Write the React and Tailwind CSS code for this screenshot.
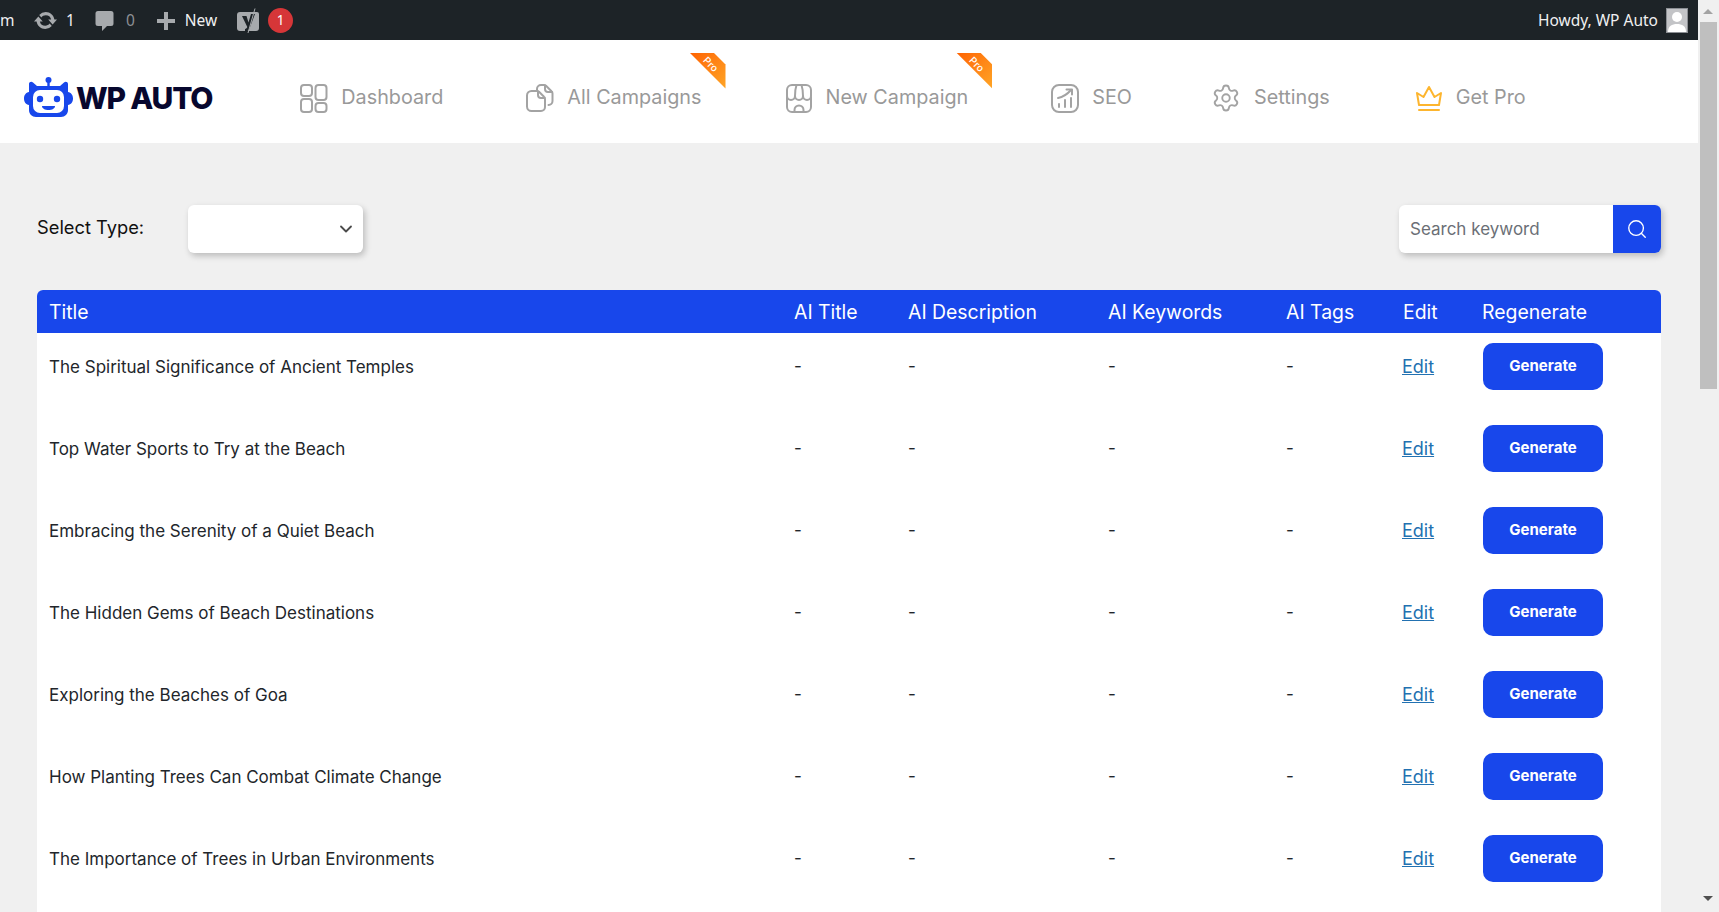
import { ChevronDown, Search, Settings } from "lucide-react";

const titles = [
  "The Spiritual Significance of Ancient Temples",
  "Top Water Sports to Try at the Beach",
  "Embracing the Serenity of a Quiet Beach",
  "The Hidden Gems of Beach Destinations",
  "Exploring the Beaches of Goa",
  "How Planting Trees Can Combat Climate Change",
  "The Importance of Trees in Urban Environments",
];

const iconProps = {
  width: 28,
  height: 30,
  viewBox: "0 0 28 30",
  fill: "none",
  stroke: "#a3a3a3",
  strokeWidth: 2,
  strokeLinecap: "round",
  strokeLinejoin: "round",
};

function DashboardIcon() {
  return (
    <svg {...iconProps}>
      <rect x="1" y="2" width="11" height="11" rx="3" />
      <rect x="1" y="16" width="11" height="13" rx="3" />
      <rect x="15.5" y="2" width="11" height="15" rx="3" />
      <rect x="15.5" y="20" width="11" height="9" rx="3" />
    </svg>
  );
}

function CampaignsIcon() {
  return (
    <svg {...iconProps}>
      <path d="M11 7.500V6a4 4 0 0 1 4-4h3a3 3 0 0 1 2 .8l5.500 5.500a3 3 0 0 1 1 2.200V18a4 4 0 0 1-4 4" />
      <path d="M19 2.500V6a3 3 0 0 0 3 3h4" />
      <path d="M5.500 8H11a3 3 0 0 1 2 .8l5 5a3 3 0 0 1 1 2.200v8a4 4 0 0 1-4 4H5.500a4.500 4.500 0 0 1-4.500-4.500v-11A4.500 4.500 0 0 1 5.500 8z" fill="#fff" />
      <path d="M12 8.500V12a3 3 0 0 0 3 3h3.500" />
    </svg>
  );
}

function StoreIcon() {
  return (
    <svg {...iconProps}>
      <path d="M2 14v10a5 5 0 0 0 5 5h14a5 5 0 0 0 5-5V14" />
      <path d="M7 2h14a5 5 0 0 1 5 5v6a4 4 0 0 1-4 4 4 4 0 0 1-4-4 4 4 0 0 1-8 0 4 4 0 0 1-4 4 4 4 0 0 1-4-4V7a5 5 0 0 1 5-5z" />
      <path d="M10 13c0-4 .5-8 1.500-11M18 13c0-4-.5-8-1.500-11" />
      <path d="M9.500 29v-2a4.500 4.500 0 0 1 9 0v2" />
    </svg>
  );
}

function SeoIcon() {
  return (
    <svg {...iconProps}>
      <rect x="1" y="2" width="26" height="27" rx="7" />
      <path d="M7 15c5-1 9-3.500 13-8" />
      <path d="M15.500 6.500H21v5" />
      <path d="M8 24v-3M14 24v-7M20 24v-9" />
    </svg>
  );
}

function CrownIcon() {
  return (
    <svg width="28" height="28" viewBox="0 0 28 28" fill="none" stroke="#fdb52e" strokeWidth="2" strokeLinecap="round" strokeLinejoin="round">
      <path d="M4 21 2 9l6.500 4L14 3l5.500 10L26 9l-2 12z" />
      <path d="M4 26h20" />
    </svg>
  );
}

function RobotLogo() {
  return (
    <svg width="49" height="41" viewBox="0 0 49 41" className="shrink-0">
      <circle cx="24.500" cy="3" r="3" fill="#1847eb" />
      <path d="M23.300 3h2.400v8h-2.400z" fill="#1847eb" />
      <path d="M5 15V7c0-2 2.500-3 4-1.500L13 9h23l4-3.500C41.500 4 44 5 44 7v8c3 .5 5 3 5 6.500S47 27.500 44 28v5c0 4-3 7-7 7H12c-4 0-7-3-7-7v-5c-3-.5-5-3-5-6.500S2 15.500 5 15z" fill="#1847eb" />
      <rect x="9" y="13" width="31" height="23" rx="7" fill="#fff" />
      <circle cx="16" cy="22" r="3.200" fill="#1847eb" />
      <circle cx="33" cy="22" r="3.200" fill="#1847eb" />
      <path d="M18 29h13c0 2.500-3 4-6.500 4S18 31.500 18 29z" fill="#1847eb" />
    </svg>
  );
}

function Ribbon() {
  return (
    <div className="absolute -right-[24px] -top-[30px] h-[36px] w-[36px] bg-linear-to-br from-[#ff6200] to-[#ffa525] [clip-path:polygon(0_0,24px_0,36px_12px,36px_100%)]">
      <span className="absolute left-[13px] top-[6px] rotate-45 text-[10px] font-medium leading-none text-white">Pro</span>
    </div>
  );
}

function NavItem({ icon, label, pro, spacing = "mr-[83px]" }) {
  return (
    <div className={`relative flex items-center gap-[13px] ${spacing}`}>
      {icon}
      <span className="relative text-[19.800px] leading-none text-[#999]">{label}</span>
      {pro ? <Ribbon /> : null}
    </div>
  );
}

function AdminBar() {
  return (
    <div className="flex h-10 items-center bg-[#1d2327] pt-[1px] text-[15.500px] text-[#f0f0f1] [font-family:'Noto_Sans',sans-serif]">
      <span className="w-[33px] overflow-hidden">m</span>
      <svg width="25" height="25" viewBox="0 0 20 20" fill="#a7aaad" className="shrink-0">
        <path d="M10.200 3.280c3.530 0 6.430 2.610 6.920 6h2.080l-3.500 4-3.500-4h2.320a4.439 4.439 0 0 0-4.320-3.450c-1.450 0-2.730.71-3.540 1.780L4.950 5.660a7.010 7.010 0 0 1 5.250-2.380zm-.4 13.440c-3.520 0-6.430-2.610-6.920-6H.8l3.500-4 3.500 4H5.480a4.439 4.439 0 0 0 4.320 3.450c1.450 0 2.730-.71 3.540-1.780l1.710 1.950a7.010 7.010 0 0 1-5.250 2.380z" />
      </svg>
      <span className="ml-[8px]">1</span>
      <svg width="19" height="22" viewBox="0 0 19 22" fill="#a7aaad" className="ml-[20px] shrink-0">
        <path d="M3 1h13a2.500 2.500 0 0 1 2.500 2.500v10A2.500 2.500 0 0 1 16 16h-4l-5 5v-5H3a2.500 2.500 0 0 1-2.500-2.500v-10A2.500 2.500 0 0 1 3 1z" />
      </svg>
      <span className="ml-[12px] text-[#8c8f94]">0</span>
      <svg width="18" height="18" viewBox="0 0 18 18" fill="#a7aaad" className="ml-[22px] shrink-0">
        <path d="M7 0h4v7h7v4h-7v7H7v-7H0V7h7z" />
      </svg>
      <span className="ml-[10px]">New</span>
      <svg width="24" height="26" viewBox="0 0 24 26" className="ml-[19px] shrink-0">
        <path d="M4 4h17a2 2 0 0 1 2 2v14a3 3 0 0 1-3 3H4a3 3 0 0 1-3-3V7a3 3 0 0 1 3-3z" fill="#a7aaad" />
        <path d="M6 8h4.500l2 6.500L15 6h4l-5.500 14.500c-.8 2-2.200 3-4.500 3.500v-3c1.200-.2 1.900-.8 2.300-2z" fill="#1d2327" />
        <path d="M19 0.500 12 25" stroke="#a7aaad" strokeWidth="1" />
      </svg>
      <span className="ml-[8px] grid h-[25px] w-[25px] place-items-center rounded-full bg-[#d63638] text-[13.500px] text-white">1</span>
      <div className="ml-auto flex items-center gap-[8px] pr-[10px]">
        <span>Howdy, WP Auto</span>
        <div className="h-[25px] w-[22px] overflow-hidden border border-[#8c8f94] bg-[#c3c4c7]">
          <svg width="20" height="23" viewBox="0 0 20 23" fill="#fff">
            <circle cx="10" cy="8" r="5" />
            <path d="M1 23c0-6 4-8 9-8s9 2 9 8z" />
          </svg>
        </div>
      </div>
    </div>
  );
}

function TopNav() {
  return (
    <div className="flex h-[103px] items-center bg-white pl-[24px] pt-[12px]">
      <div className="mr-[88px] flex items-center gap-[3px]">
        <RobotLogo />
        <span className="text-[30px] font-extrabold leading-none tracking-[-1.200px] text-[#07072e]">WP AUTO</span>
      </div>
      <NavItem icon={<DashboardIcon />} label="Dashboard" />
      <NavItem icon={<CampaignsIcon />} label="All Campaigns" pro />
      <NavItem icon={<StoreIcon />} label="New Campaign" pro />
      <NavItem icon={<SeoIcon />} label="SEO" spacing="mr-[79px]" />
      <NavItem icon={<Settings size={30} strokeWidth={1.500} color="#a3a3a3" />} label="Settings" spacing="mr-[85px]" />
      <NavItem icon={<CrownIcon />} label="Get Pro" />
    </div>
  );
}

function Filters() {
  return (
    <div className="flex items-center justify-between">
      <div className="flex items-center">
        <span className="-mt-[2px] w-[151px] text-[18.300px] text-[#111]">Select Type:</span>
        <div className="flex h-[48px] w-[175px] items-center justify-end rounded-md bg-white pr-[7px] shadow-[2px_3px_6px_rgba(0,0,0,0.22)]">
          <ChevronDown size={20} strokeWidth={2.200} color="#4b4b4b" />
        </div>
      </div>
      <div className="flex h-[48px] w-[262px] overflow-hidden rounded-md bg-white shadow-[2px_3px_6px_rgba(0,0,0,0.22)]">
        <span className="flex flex-1 items-center pl-[11px] pt-[1px] text-[17px] text-[#6b6f76]">Search keyword</span>
        <div className="grid w-[48px] place-items-center bg-[#1847eb]">
          <Search size={22} strokeWidth={1.500} color="#fff" />
        </div>
      </div>
    </div>
  );
}

function ResultsTable() {
  return (
    <div className="mt-[37px] flex flex-1 flex-col overflow-hidden rounded-t-md bg-white">
      <table className="w-full table-fixed border-collapse">
        <colgroup>
          <col className="w-[745px]" />
          <col className="w-[114px]" />
          <col className="w-[200px]" />
          <col className="w-[178px]" />
          <col className="w-[117px]" />
          <col className="w-[79px]" />
          <col />
        </colgroup>
        <thead>
          <tr className="h-[43px] bg-[#1847eb] text-left text-[19.400px] text-white">
            <th className="pl-[12px] pt-[2px] font-normal">Title</th>
            <th className="pl-[12px] pt-[2px] font-normal">AI Title</th>
            <th className="pl-[12px] pt-[2px] font-normal">AI Description</th>
            <th className="pl-[12px] pt-[2px] font-normal">AI Keywords</th>
            <th className="pl-[12px] pt-[2px] font-normal">AI Tags</th>
            <th className="pl-[12px] pt-[2px] font-normal">Edit</th>
            <th className="pl-[12px] pt-[2px] font-normal">Regenerate</th>
          </tr>
        </thead>
        <tbody className="text-[17px] text-[#22262b]">
          {titles.map((title) => (
            <tr key={title} className="h-[82px] align-top">
              <td className="pl-[12px] pt-[21px] leading-[26px]">{title}</td>
              <td className="pl-[12px] pt-[20px] leading-[26px]">-</td>
              <td className="pl-[12px] pt-[20px] leading-[26px]">-</td>
              <td className="pl-[12px] pt-[20px] leading-[26px]">-</td>
              <td className="pl-[12px] pt-[20px] leading-[26px]">-</td>
              <td className="pl-[11px] pt-[21px] text-[18px] leading-[26px]">
                <a href="#edit" className="text-[#2271b1] underline">Edit</a>
              </td>
              <td className="pl-[13px] pt-[10px]">
                <button type="button" className="h-[47px] w-[120px] rounded-[10px] bg-[#1847eb] text-[15px] font-bold text-white">Generate</button>
              </td>
            </tr>
          ))}
        </tbody>
      </table>
    </div>
  );
}

function Scrollbar() {
  return (
    <div className="flex w-[21px] shrink-0 flex-col items-center bg-[#f0f0f0] pr-[2px]">
      <div className="flex h-[22px] items-center">
        <div className="h-0 w-0 border-x-[5px] border-b-[5px] border-x-transparent border-b-[#a3a3a3]" />
      </div>
      <div className="ml-[2px] h-[367px] w-[17px] bg-[#bfbfbf]" />
      <div className="mt-auto flex h-[22px] items-center pb-[6px]">
        <div className="h-0 w-0 border-x-[5px] border-t-[5px] border-x-transparent border-t-[#505050]" />
      </div>
    </div>
  );
}

export default function App() {
  return (
    <div className="flex h-[912px] overflow-hidden bg-[#f0f0f0] [font-family:Inter,sans-serif]">
      <main className="flex min-w-0 flex-1 flex-col">
        <AdminBar />
        <TopNav />
        <div className="flex min-h-0 flex-1 flex-col pl-[37px] pr-[37px] pt-[62px]">
          <Filters />
          <ResultsTable />
        </div>
      </main>
      <Scrollbar />
    </div>
  );
}
